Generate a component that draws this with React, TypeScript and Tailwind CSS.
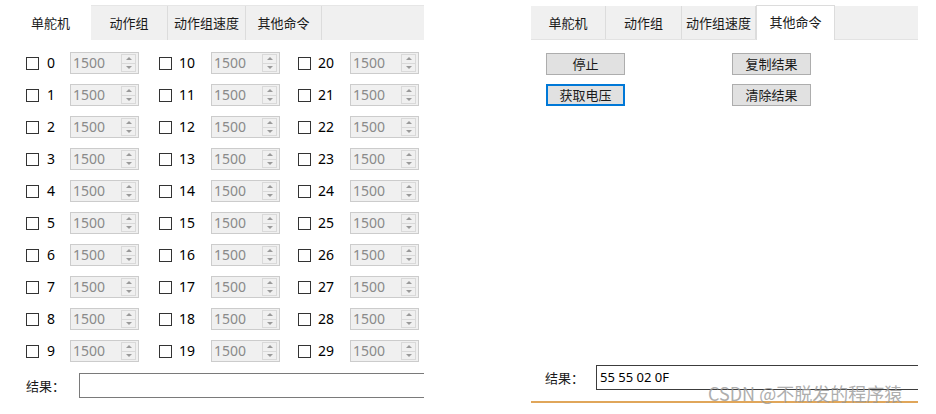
const cjk = { fontFamily: '"Microsoft YaHei", "Noto Sans CJK SC", "Noto Sans", sans-serif' };
const latin = { fontFamily: '"Segoe UI", "Noto Sans", "Liberation Sans", sans-serif' };

function SpinBox() {
  return (
    <div className="flex h-[22px] w-[69px] items-center border border-[#cccccc] bg-[#f0f0f0]">
      <span className="flex-1 pl-[2px] text-[14px] leading-none text-[#8a8a8a]" style={latin}>
        1500
      </span>
      <div className="mr-[2px] flex h-[18px] w-[15px] flex-col border border-[#d9d9d9]">
        <div className="flex flex-1 items-center justify-center border-b border-[#d9d9d9]">
          <span className="h-0 w-0 border-x-[3px] border-b-[3px] border-x-transparent border-b-[#9a9a9a]" />
        </div>
        <div className="flex flex-1 items-center justify-center">
          <span className="h-0 w-0 border-x-[3px] border-t-[3px] border-x-transparent border-t-[#9a9a9a]" />
        </div>
      </div>
    </div>
  );
}

function Cell({ n, labelW, gap, width }: { n: number; labelW: string; gap: string; width: string }) {
  return (
    <div className={`flex items-center ${width}`}>
      <span className="h-[13px] w-[13px] shrink-0 border border-[#333333] bg-white" />
      <span className={`${gap} ${labelW} text-[14px] leading-none text-black`} style={latin}>
        {n}
      </span>
      <SpinBox />
    </div>
  );
}

function Tab({ label, w, active }: { label: string; w: string; active?: boolean }) {
  return (
    <div
      className={`flex h-full ${w} items-center justify-center text-[13px] text-[#1a1a1a] ${
        active ? 'bg-white pl-[10px]' : 'border-r border-[#dcdcdc]'
      }`}
      style={cjk}
    >
      {label}
    </div>
  );
}

function Button({ label, focused }: { label: string; focused?: boolean }) {
  return (
    <div
      className={`flex h-[22px] w-[79px] items-center justify-center bg-[#e1e1e1] text-[13px] text-[#1a1a1a] ${
        focused ? 'border-2 border-[#0078d7]' : 'border border-[#adadad]'
      }`}
      style={cjk}
    >
      {label}
    </div>
  );
}

function LeftPanel() {
  const rows = Array.from({ length: 10 }, (_, i) => i);
  return (
    <div className="flex h-[414px] w-[424px] flex-col">
      <div className="mt-[5px] flex h-[35px]">
        <Tab label="单舵机" w="w-[91px]" active />
        <div className="flex flex-1 border-t border-[#e6e6e6] bg-[#f0f0f0]">
          <Tab label="动作组" w="w-[77px]" />
          <Tab label="动作组速度" w="w-[78px]" />
          <Tab label="其他命令" w="w-[76px]" />
        </div>
      </div>
      <div className="mt-[12px] flex flex-col gap-[10px] pl-[26px]">
        {rows.map((i) => (
          <div key={i} className="flex h-[22px]">
            <Cell n={i} labelW="w-[23px]" gap="ml-[8px]" width="w-[133px]" />
            <Cell n={i + 10} labelW="w-[32px]" gap="ml-[7px]" width="w-[139px]" />
            <Cell n={i + 20} labelW="w-[32px]" gap="ml-[7px]" width="w-[126px]" />
          </div>
        ))}
      </div>
      <div className="mt-[11px] flex items-center">
        <span className="w-[79px] pl-[26px] text-[13px] text-[#1a1a1a]" style={cjk}>
          结果：
        </span>
        <div className="h-[25px] flex-1 border-y border-l border-[#7a7a7a] bg-white" />
      </div>
    </div>
  );
}

function RightPanel() {
  return (
    <div className="relative flex h-[414px] w-[387px] flex-col">
      <div className="mt-[5px] flex h-[35px] items-end">
        <div className="flex h-[34px] flex-1 border-b border-[#e3e3e3] bg-[#f0f0f0]">
          <Tab label="单舵机" w="w-[75px]" />
          <Tab label="动作组" w="w-[76px]" />
          <Tab label="动作组速度" w="w-[74px]" />
          <div
            className="-mt-[1px] flex h-[35px] w-[79px] items-start justify-center border-x border-t border-[#dcdcdc] bg-white pt-[6px] text-[13px] text-[#1a1a1a]"
            style={cjk}
          >
            其他命令
          </div>
        </div>
      </div>
      <div className="mt-[13px] grid grid-cols-[186px_79px] gap-y-[9px] pl-[15px]">
        <Button label="停止" />
        <Button label="复制结果" />
        <Button label="获取电压" focused />
        <Button label="清除结果" />
      </div>
      <div className="flex-1" />
      <div className="flex items-center">
        <span className="w-[65px] pl-[14px] text-[13px] text-[#1a1a1a]" style={cjk}>
          结果：
        </span>
        <div
          className="flex h-[25px] flex-1 items-center border-y border-l border-[#3c3c3c] bg-white pl-[3px] text-[13px] text-black"
          style={latin}
        >
          55 55 02 0F
        </div>
      </div>
      <div className="mt-[11px] mb-[11px] h-[2px] bg-[#e0a65a]" />
      <div
        className="pointer-events-none absolute left-[177px] top-[384px] text-[18px] leading-none text-[#9a9a9a] opacity-80"
        style={cjk}
      >
        CSDN @不脱发的程序猿
      </div>
    </div>
  );
}

export default function App() {
  return (
    <div className="flex h-[414px] w-[936px] bg-white">
      <LeftPanel />
      <div className="w-[107px]" />
      <RightPanel />
    </div>
  );
}
